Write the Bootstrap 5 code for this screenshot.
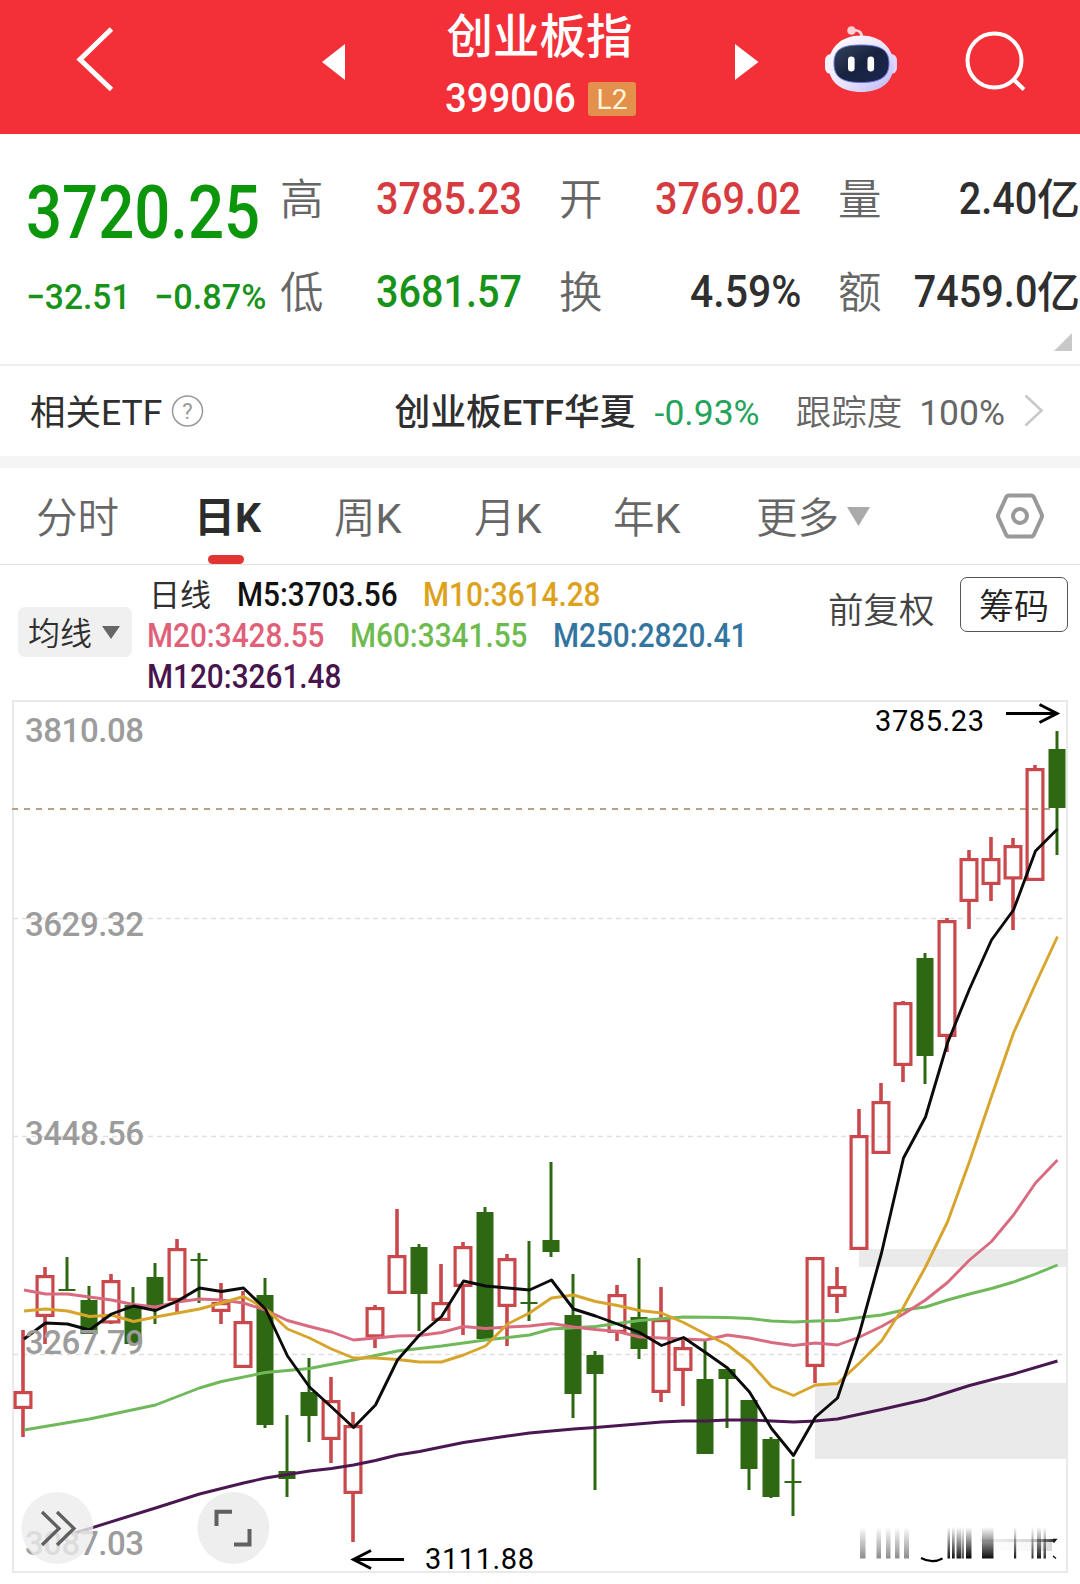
<!DOCTYPE html>
<html lang="zh-CN">
<head>
<meta charset="utf-8">
<meta name="viewport" content="width=device-width, initial-scale=1">
<title>创业板指 399006</title>
<link href="https://cdn.jsdelivr.net/npm/bootstrap@5.3.0/dist/css/bootstrap.min.css" rel="stylesheet">
<script src="https://cdn.jsdelivr.net/npm/bootstrap@5.3.0/dist/js/bootstrap.bundle.min.js"></script>
<style>
body{width:1080px;height:1584px;overflow:hidden;background:#fff;color:#2f2f2f;font-family:Roboto,"Noto Sans CJK SC",sans-serif;line-height:1}
svg{display:block;flex:none}
.topbar{height:134px;background:#f32f38;color:#fff}
.topbar .back{margin-left:72px}
.topbar .prev{margin-left:202px}
.title-box{width:200px;margin:0 94px 0 95px;height:134px;padding-top:12px}
.idx-name{font-size:46.5px;font-weight:500;line-height:50px;height:66px;padding-left:5.5px;white-space:nowrap}
.idx-code{font-size:41px;font-weight:500;width:142px;padding-left:4px}
.code-in,.num{display:inline-block;transform-origin:left center;white-space:nowrap}
.code-in{transform:scaleX(.935)}
.lv2{background:#e3904c;color:#fff6d8;width:48px;height:34px;border-radius:3px;font-size:28px;line-height:35px;text-align:center;margin-left:5px}
.topbar .bot{margin-left:62px}
.topbar .find{margin-left:63px}
.quote{height:232px;border-bottom:2px solid #f0f0f0;padding-top:18px}
.up{color:#d63b40}.down{color:#179319}
.main-q{width:280px;padding-left:26px}
.price{font-size:74px;font-weight:500;height:119px;line-height:122px;color:#0c960c}
.price .num{transform:scaleX(.858)}
.delta{font-size:35.5px;font-weight:500;height:50px;line-height:52px}
.delta .num{transform:scaleX(.945)}
.delta .num.pct{transform:scaleX(.965)}
.delta .d1{width:128px}
.cells{width:800px}
.cell{width:242px;margin-right:37px;height:93px}
.cell:nth-child(3n){margin-right:0}
.cell .lab{font-size:43.5px;color:#666;font-weight:350;padding-top:5px}
.cell .val{font-size:45px;font-weight:500;display:flex;align-items:center}
.cell .num{transform:scaleX(.88);transform-origin:right center}
.cell .num.pct{transform:scaleX(.91)}
.cell .unit{font-size:43px;padding-top:3px}
.corner{margin-left:1054px;margin-top:-5px}
.etf{height:90px;font-size:35.5px;padding:0 36px 0 30px}
.etf>span{padding-top:5px}
.etf .fund{font-weight:500;font-size:35.8px}
.etf .chg{color:#24a35a;margin-left:19px}
.etf .track{color:#666;margin-left:36px;font-weight:350}
.etf .pct{color:#666;margin-left:17px}
.etf .more{margin-left:19px}
.band{height:12px;background:#f5f5f5}
.ktabs{height:97px;border-bottom:1.5px solid #dedede;font-size:41.5px;color:#666;font-weight:350;position:relative}
.ktabs .tab{height:96px;line-height:101px;white-space:nowrap}
.ktabs .on{color:#2c2c2c;font-weight:700;font-size:41px}
.ktabs .on::after{content:"";position:absolute;left:208px;top:87px;width:36px;height:9px;border-radius:5px;background:#e03531}
.legend-row{height:135px}
.ma-btn{margin:42px 0 0 18px;width:114px;height:50px;background:#f0f0f0;border-radius:7px;font-size:32px;padding-left:10px;font-weight:350}
.ma-btn span{padding-top:4px}
.ma-list{width:650px;margin-left:15px;padding-top:9px;font-size:33px;font-weight:500}
.ma-list .line{height:41px;line-height:41px;display:flex}
.ma-list .num{transform:scaleX(.902);flex:none}
.fq{margin:28px 0 0 31px;font-size:35.5px;line-height:36px;color:#444;font-weight:350;width:132px}
.chip{margin-top:12px;width:108px;height:55px;border:1.5px solid #555;border-radius:7px;font-size:35px;color:#222;padding-top:5px;font-weight:350}
.axis{font:500 33px Roboto,sans-serif;fill:#9c9c9c}
.mark-text{font:400 29px Roboto,sans-serif;fill:#000}
.ma{fill:none;stroke-width:2.9;stroke-linejoin:round}
</style>
</head>
<body>
<header class="topbar d-flex align-items-start">
  <svg class="back" width="48" height="134" viewBox="72 0 48 134"><path d="M111.500 29L80 59.500L111.500 89.500" fill="none" stroke="#fff" stroke-width="5"/></svg>
  <svg class="prev" width="24" height="134" viewBox="322 0 24 134"><path d="M322 62L345 44V80Z" fill="#fff"/></svg>
  <div class="title-box">
    <div class="idx-name">创业板指</div>
    <div class="d-flex align-items-center"><span class="idx-code"><span class="code-in">399006</span></span><span class="lv2">L2</span></div>
  </div>
  <svg width="24" height="134" viewBox="735 0 24 134"><path d="M758.500 62L735 44V80Z" fill="#fff"/></svg>
  <svg class="bot" width="80" height="134" viewBox="821 0 80 134">
    <defs>
      <linearGradient id="shell" x1="0" y1="0" x2="1" y2="1"><stop offset="0" stop-color="#fff"/><stop offset=".55" stop-color="#e9e4fb"/><stop offset="1" stop-color="#b9b4f4"/></linearGradient>
      <linearGradient id="visor" x1="0" y1="0" x2="1" y2="1"><stop offset="0" stop-color="#34435e"/><stop offset=".5" stop-color="#18223f"/><stop offset="1" stop-color="#1c2650"/></linearGradient>
    </defs>
    <path d="M852 30.500Q862 29 862 38" fill="none" stroke="#ffdadd" stroke-width="2.600"/><circle cx="851.500" cy="30.500" r="4.300" fill="#ffd3d6"/>
    <rect x="825" y="54" width="12" height="20" rx="6" fill="#f4f0ff"/><rect x="885" y="54" width="12" height="20" rx="6" fill="#ddd8fb"/>
    <path d="M861 35.500C881 35.500 893.500 48 893.500 65C893.500 83 880 92 861 92C842 92 828.500 83 828.500 65C828.500 48 841 35.500 861 35.500Z" fill="url(#shell)"/>
    <path d="M861 45C881 45 889 50 889 63.500C889 77 880 82.500 861 82.500C842 82.500 834 77 834 63.500C834 50 841 45 861 45Z" fill="url(#visor)" stroke="#6874dc" stroke-width="1"/>
    <rect x="848" y="56.500" width="6.600" height="15" rx="3.300" fill="#fff"/><rect x="867.500" y="56.500" width="6.600" height="15" rx="3.300" fill="#fff"/>
  </svg>
  <svg class="find" width="64" height="134" viewBox="964 0 64 134"><circle cx="994.500" cy="60.500" r="27" fill="none" stroke="#fff" stroke-width="4"/><path d="M1013 79L1024 89.500" stroke="#fff" stroke-width="4"/></svg>
</header>

<section class="quote">
  <div class="d-flex">
    <div class="main-q">
      <div class="price"><span class="num">3720.25</span></div>
      <div class="delta down d-flex"><span class="d1"><span class="num">−32.51</span></span><span class="num pct">−0.87%</span></div>
    </div>
    <div class="cells d-flex flex-wrap">
      <div class="cell d-flex justify-content-between align-items-center"><span class="lab">高</span><span class="val up"><span class="num">3785.23</span></span></div>
      <div class="cell d-flex justify-content-between align-items-center"><span class="lab">开</span><span class="val up"><span class="num">3769.02</span></span></div>
      <div class="cell d-flex justify-content-between align-items-center"><span class="lab">量</span><span class="val"><span class="num">2.40</span><span class="unit">亿</span></span></div>
      <div class="cell d-flex justify-content-between align-items-center"><span class="lab">低</span><span class="val down"><span class="num">3681.57</span></span></div>
      <div class="cell d-flex justify-content-between align-items-center"><span class="lab">换</span><span class="val"><span class="num pct">4.59%</span></span></div>
      <div class="cell d-flex justify-content-between align-items-center"><span class="lab">额</span><span class="val"><span class="num">7459.0</span><span class="unit">亿</span></span></div>
    </div>
  </div>
  <svg class="corner" width="18" height="18" viewBox="0 0 18 18"><path d="M18 0V18H0Z" fill="#c8c8c8"/></svg>
</section>

<section class="etf d-flex align-items-center">
  <span>相关ETF</span>
  <svg class="ms-2" width="34" height="34" viewBox="0 0 34 34"><circle cx="17.500" cy="17" r="15" fill="none" stroke="#999" stroke-width="1.500"/><text x="17.500" y="25" text-anchor="middle" font-family="Roboto" font-size="22" fill="#999">?</text></svg>
  <span class="fund ms-auto">创业板ETF华夏</span>
  <span class="chg">-0.93%</span>
  <span class="track">跟踪度</span>
  <span class="pct">100%</span>
  <svg class="more" width="20" height="34" viewBox="0 0 20 34"><path d="M1.500 1.500L17.500 16.500L1.500 31.500" fill="none" stroke="#c8c8c8" stroke-width="2.600"/></svg>
</section>
<div class="band"></div>

<nav class="ktabs d-flex">
  <div class="tab" style="width:161px;padding-left:36px">分时</div>
  <div class="tab on" style="width:138px;padding-left:33px">日K</div>
  <div class="tab" style="width:140px;padding-left:35px">周<span class="fw-normal">K</span></div>
  <div class="tab" style="width:139px;padding-left:35px">月<span class="fw-normal">K</span></div>
  <div class="tab" style="width:178px;padding-left:35px">年<span class="fw-normal">K</span></div>
  <div class="tab d-flex align-items-center"><span class="pt-1">更多</span><svg style="margin-left:8px" width="23" height="19" viewBox="0 0 23 19"><path d="M0 0H23L11.500 19Z" fill="#aaa"/></svg></div>
  <svg class="ms-auto" style="margin-right:34px" width="52" height="96" viewBox="994 468 52 96"><path d="M1009 495.500H1031Q1033 495.500 1034 497.500L1041.500 514Q1042.500 516 1041.500 518L1034 534.500Q1033 536.500 1031 536.500H1009Q1007 536.500 1006 534.500L998.500 518Q997.500 516 998.500 514L1006 497.500Q1007 495.500 1009 495.500Z" fill="none" stroke="#999" stroke-width="4"/><circle cx="1020" cy="516" r="7" fill="none" stroke="#999" stroke-width="4"/></svg>
</nav>

<section class="legend-row d-flex align-items-start">
  <div class="ma-btn d-flex align-items-center"><span>均线</span><svg style="margin-left:10px" width="18" height="13" viewBox="0 0 18 13"><path d="M0 0H18L9 13Z" fill="#666"/></svg></div>
  <div class="ma-list">
    <div class="line"><span style="width:90px;font-size:31px;font-weight:400;padding:1px 0 0 2px">日线</span><span class="num" style="width:185.500px;color:#111">M5:3703.56</span><span class="num" style="color:#dda21c">M10:3614.28</span></div>
    <div class="line" style="color:#e0607a"><span class="num" style="width:203px">M20:3428.55</span><span class="num" style="width:203px;color:#6dbb4e">M60:3341.55</span><span class="num" style="color:#33759f">M250:2820.41</span></div>
    <div class="line" style="color:#48144e"><span class="num">M120:3261.48</span></div>
  </div>
  <div class="fq">前复权</div>
  <div class="chip d-flex align-items-center justify-content-center">筹码</div>
</section>

<svg id="chart" width="1080" height="884" viewBox="0 700 1080 884">
  <defs>
    <linearGradient id="bar" x1="0" y1="0" x2="0" y2="1"><stop offset="0" stop-color="#000" stop-opacity="0"/><stop offset="1" stop-color="#000" stop-opacity="1"/></linearGradient>
    <linearGradient id="smear" x1="0" y1="0" x2="1" y2="0"><stop offset="0" stop-color="#000" stop-opacity=".04"/><stop offset=".7" stop-color="#000" stop-opacity=".16"/><stop offset="1" stop-color="#000" stop-opacity=".8"/></linearGradient>
  </defs>
  <rect x="859" y="1249" width="208" height="18" fill="#eaeaea"/>
  <rect x="815" y="1383" width="252" height="76" fill="#eaeaea"/>
  <path d="M13 701H1067V1572H13Z" fill="none" stroke="#e8eaea" stroke-width="2"/>
  <path d="M13 918.500H1067M13 1136.500H1067M13 1354.500H1067" stroke="#e0e0e0" stroke-width="1.300" stroke-dasharray="5 4"/>
  <path d="M12 809H1057" stroke="#b3a284" stroke-width="2" stroke-dasharray="6 6"/>
  <g id="candles"></g>
  <g id="lines"></g>
  <g class="axis">
    <text x="25" y="742" textLength="119">3810.08</text><text x="25" y="936" textLength="119">3629.32</text>
    <text x="25" y="1145" textLength="119">3448.56</text><text x="25" y="1354" textLength="119">3267.79</text>
    <text x="25" y="1555" textLength="119">3087.03</text>
  </g>
  <g class="mark-text"><text x="875" y="731" textLength="109">3785.23</text><text x="425" y="1568.500" textLength="109">3111.88</text></g>
  <g fill="none" stroke="#000" stroke-width="3"><path d="M1006 713.500H1056M1039.500 704.500L1057 713.500L1039.500 722.500"/><path d="M404 1559.500H354M371 1550.500L353.500 1559.500L371 1568.500"/></g>
  <circle cx="57.300" cy="1528" r="36" fill="#ececec" fill-opacity=".8"/><circle cx="233.300" cy="1528" r="36" fill="#eee"/>
  <g fill="none" stroke="#606060" stroke-width="3.300"><path d="M42 1512L59 1528.500L42 1545M57 1512L74 1528.500L57 1545"/><path d="M216.500 1526V1511.700H232M249.500 1529V1544.500H234" stroke-width="4"/></g>
  <g id="stamp"></g>
</svg>

<script>
// Each candle: direction (u rising, d falling, x doji), body top, body bottom, wick top, wick bottom
const candles = `u 1391 1409 1330 1437|u 1275 1317 1267 1344|x 1290 1290 1257 1290|d 1300 1334 1286 1334|u 1280 1323.500 1274 1324|d 1305 1344 1287 1345|d 1277 1306 1263 1324|u 1248 1301 1239 1313|x 1260 1260 1253 1303|u 1302 1312 1283 1324|u 1321 1368 1291 1368|d 1295 1425 1278 1428|d 1471 1479 1415 1497|d 1392 1416 1358 1442|u 1400 1440 1377 1463|u 1425 1494 1412 1542|u 1307 1337.500 1305 1348|u 1255 1294 1209 1294|d 1247 1294 1244 1331|u 1302 1321 1264 1321|u 1246 1287 1242 1335|d 1212 1339 1207 1339|u 1258 1307 1254 1346|x 1303 1303 1241 1321|d 1240 1252 1162 1257|d 1315 1394 1274 1418|d 1355 1374 1351 1490|u 1294 1333 1285 1341|d 1317 1349 1258 1359|u 1319 1393 1287 1402|u 1347 1371 1338 1406|d 1379 1454 1341 1454|d 1369 1379 1369 1428|d 1400 1469 1400 1490|d 1439 1497 1437 1498|x 1482 1482 1459 1516|u 1257 1367 1257 1383|u 1286 1297 1267 1313|u 1135 1250 1109 1250|u 1101 1154 1083 1154|u 1002 1066 1001 1082|d 958 1056 953 1084|u 920 1037 918 1052|u 858 902 850 929|u 858 885 837 901|u 845 879.500 838 930|u 768 881 765 881|d 749 808 731 855`.split('|');
const X = i => 23 + 22 * i;
document.getElementById('candles').innerHTML = candles.map((c, i) => {
  const [k, ...v] = c.split(' '), [t, b, h, l] = v.map(Number), x = X(i);
  const col = k === 'u' ? '#c9484c' : '#2f6813';
  if (k === 'u') return `<path d="M${x} ${h}V${t + 1}M${x} ${b - 1}V${l}" stroke="${col}" stroke-width="3.600"/><rect x="${x - 7.900}" y="${t + 1.600}" width="15.800" height="${b - t - 3.200}" fill="none" stroke="${col}" stroke-width="3.200"/>`;
  const body = k === 'x' ? `<path d="M${x - 8.500} ${t}H${x + 8.500}" stroke="${col}" stroke-width="2"/>` : `<rect x="${x - 8.500}" y="${t}" width="17" height="${b - t}" fill="${col}"/>`;
  return `<path d="M${x} ${h}V${l}" stroke="${col}" stroke-width="3"/>` + body;
}).join('');

// Moving averages as "index:y" pairs
const averages = [
  ['#4a1850', '2.2:1534 6:1508 8:1494 10:1483 11:1478 12:1474.5 13:1471 14:1468.5 15:1465 16:1460.5 17:1455 18:1451.5 20:1442.5 22:1436 23:1433 25:1429 26:1427.5 29:1422 30:1421 31:1421 32:1420 33:1420 34:1421 35:1422 36:1421 37:1419 39:1409.5 41:1399.5 43:1385.5 45:1374 47:1361'],
  ['#6fb95a', '0:1430 3:1419 6:1405 8:1388 9:1381.5 11:1372.5 13:1368.5 15:1360 17:1351 19:1346 21:1340 23:1335 24:1329 26:1326.5 28:1320.5 30:1317 32:1317.5 33:1318.5 34:1321 35:1322 36:1321 37:1320.5 38:1317.5 39:1315 40:1310 41:1307 42:1300 43:1294 44:1288.5 45:1282 46:1274 47:1265'],
  ['#d96b80', '0:1290 1:1294 2:1294 3:1297 4:1300 5:1304.5 6:1307 7:1302 8:1299 9:1300 10:1303 11:1310 12:1320.5 13:1326.5 14:1332 15:1340 16:1338 17:1336 18:1335.5 19:1332.5 20:1326.5 21:1328.5 22:1327 23:1326 24:1323.5 25:1327 26:1329.5 27:1331.5 28:1337 29:1338 30:1339 31:1340 32:1335 33:1338 34:1342.5 35:1345.5 36:1343 37:1345 38:1337 39:1326.5 40:1314 41:1300 42:1282.5 43:1260 44:1241.5 45:1215 46:1183 47:1160'],
  ['#d8a52c', '0:1311 1:1309 2:1311 3:1316.5 4:1315 5:1321.5 6:1317 7:1313 8:1309 9:1303 10:1296.5 11:1308.5 12:1329 13:1338 14:1349 15:1358 16:1358 17:1359.5 18:1362 19:1362 20:1355 21:1346 22:1324 23:1313 24:1298 25:1295 26:1301.5 27:1305.5 28:1310.5 29:1313 30:1322.5 31:1334 32:1345 33:1362 34:1386.5 35:1395.5 36:1385 37:1383.5 38:1363 39:1341 40:1307 41:1267 42:1222 43:1161.5 44:1096.5 45:1033 46:984 47:936.5'],
  ['#0b0b0b', '0:1339 1:1323 2:1324 3:1330 4:1314 5:1306 6:1310.5 7:1301 8:1288 9:1291.5 10:1288 11:1309 12:1356 13:1387 14:1407 15:1427.5 16:1405 17:1360 18:1335 19:1316.5 20:1281 21:1286 22:1288 23:1290 24:1280 25:1309 26:1316 27:1324 28:1332.5 29:1345.5 30:1337.5 31:1352.5 32:1368 33:1392 34:1428.5 35:1455.5 36:1417 37:1398 38:1333 39:1253 40:1158 41:1117 42:1043 43:989 44:940 45:910 46:851 47:829']
];
document.getElementById('lines').innerHTML = averages.map(([col, s]) =>
  `<polyline class="ma" stroke="${col}" points="${s.split(' ').map(p => { const [i, y] = p.split(':'); return X(+i) + (i === '0' ? 1 : 0.5) + ',' + y; }).join(' ')}"/>`).join('');

// Faded stamp in the lower right corner: x, width, strength
const bars = [[860,5.5,.45],[876.5,4.5,.45],[886,4.5,.45],[895,4.5,.45],[904,5,.45],[947.5,2.5,.95],[952,2.7,.95],[956.5,4.5,.9],[961.5,2.5,.7],[966,5.5,1],[982,11.5,.95],[1014,2.2,.9],[1031.5,2,.8],[1037,4,.9],[1043.5,2.5,.8]];
document.getElementById('stamp').innerHTML = bars.map(([x, w, o]) => `<rect x="${x}" y="1527" width="${w}" height="31.500" fill="url(#bar)" opacity="${o}"/>`).join('')
  + '<rect x="980" y="1539" width="74" height="3" fill="url(#smear)"/><rect x="990" y="1542" width="62" height="9" fill="url(#smear)" opacity=".2"/>'
  + '<path d="M921 1558Q932 1564 942.500 1558.500" fill="none" stroke="#000" stroke-width="2"/><path d="M1053 1539.500h3l-2.500 3M1053 1556l3 2.500" stroke="#111" stroke-width="1.500" fill="none"/>';
</script>
</body>
</html>
